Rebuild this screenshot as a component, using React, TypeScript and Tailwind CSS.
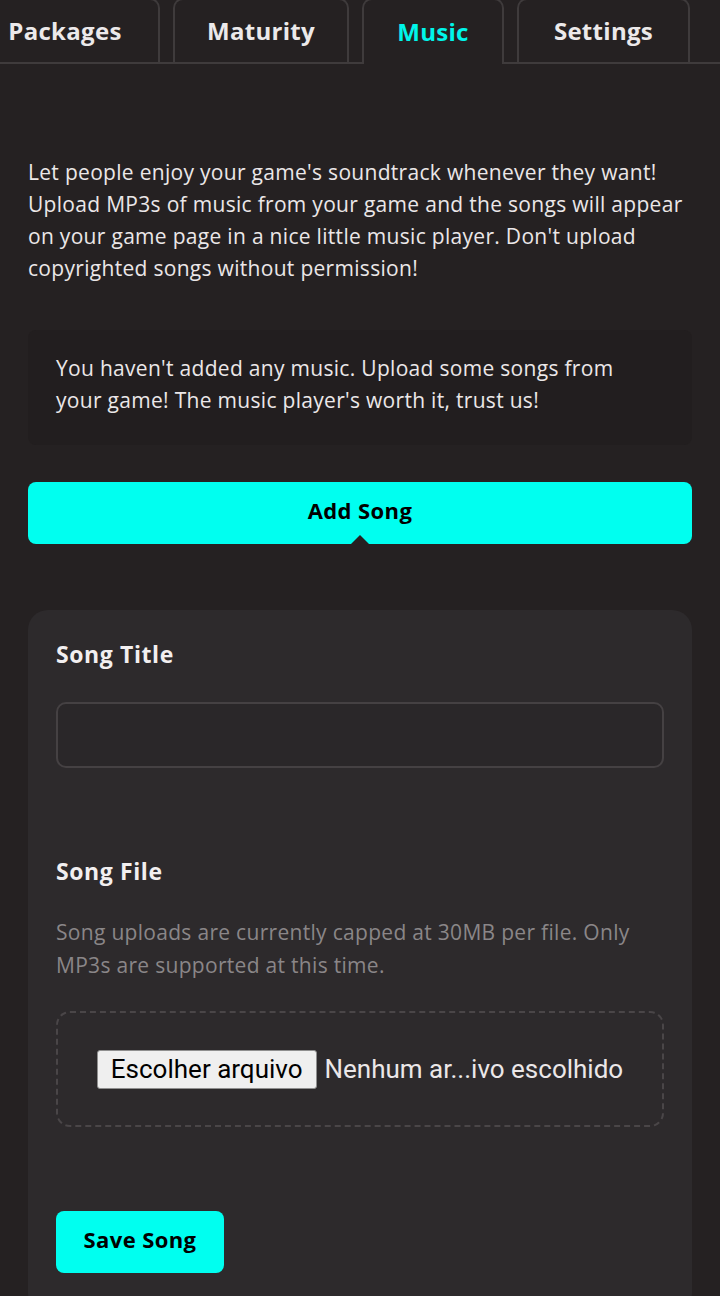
import React from "react";

const tabs = [
  { name: "Packages", w: "w-[190px]" },
  { name: "Maturity", w: "w-[176px]" },
  { name: "Music", w: "w-[142px]" },
  { name: "Settings", w: "w-[173px]" },
];

export default function App() {
  const active = "Music";

  return (
    <div className="min-h-[1296px] w-[720px] overflow-hidden bg-[#252122] font-['Open_Sans','Noto_Sans',sans-serif] text-[#ebe7e8]">
      {/* tabs */}
      <div className="relative h-[64px] border-b-2 border-[#3f3b3c]">
        <div className="absolute -top-[2px] left-[-30px] flex gap-[13px]">
          {tabs.map((t) => (
            <div
              key={t.name}
              className={
                t.name === active
                  ? `relative z-10 flex h-[66px] ${t.w} items-center justify-center rounded-t-[10px] border-2 border-b-0 border-[#3f3b3c] bg-[#252122] text-[24px] font-bold tracking-[0.3px] text-[#00f5ea]`
                  : `flex h-[64px] ${t.w} items-center justify-center rounded-t-[10px] border-2 border-b-0 border-[#3f3b3c] text-[24px] font-bold tracking-[0.3px] text-[#ece9ea]`
              }
            >
              {t.name}
            </div>
          ))}
        </div>
      </div>

      <div className="px-[28px]">
        <p className="mt-[92px] text-[21px] leading-[32px] tracking-[0.3px]">
          Let people enjoy your game's soundtrack whenever they want! Upload
          MP3s of music from your game and the songs will appear on your game
          page in a nice little music player. Don't upload copyrighted songs
          without permission!
        </p>

        <div className="mt-[46px] rounded-[8px] bg-[#221e1f] px-[28px] pb-[29px] pt-[22px]">
          <p className="text-[21px] leading-[32px] tracking-[0.3px]">
            You haven't added any music. Upload some songs from your game! The
            music player's worth it, trust us!
          </p>
        </div>

        <div className="relative mt-[37px] flex h-[62px] items-center justify-center rounded-[8px] bg-[#00fff0] pb-[6px] text-[22px] font-bold tracking-[0.4px] text-black">
          Add Song
          <div className="absolute bottom-0 left-1/2 h-0 w-0 -translate-x-1/2 border-x-[9px] border-b-[9px] border-x-transparent border-b-[#252122]" />
        </div>

        <div className="mt-[66px] rounded-[20px] bg-[#2d2a2c] px-[28px] pb-[40px] pt-[29px]">
          <h3 className="text-[23px] font-bold leading-[30px] tracking-[0.6px] text-[#f2eff0]">
            Song Title
          </h3>
          <div className="mt-[33px] h-[66px] rounded-[10px] border-2 border-[#454143] bg-[#2a2729]" />

          <h3 className="mt-[88px] text-[23px] font-bold leading-[30px] tracking-[0.6px] text-[#f2eff0]">
            Song File
          </h3>
          <p className="mt-[30px] text-[21px] leading-[33px] tracking-[0.3px] text-[#8a8688]">
            Song uploads are currently capped at 30MB per file. Only MP3s are
            supported at this time.
          </p>

          <div className="mt-[29px] flex h-[116px] items-center justify-center rounded-[14px] border-2 border-dashed border-[#4a4648]">
            <div className="flex items-center gap-[8px] font-['Roboto',sans-serif] text-[26px]">
              <span className="flex h-[39px] items-center rounded-[3px] border border-[#8f8f8f] bg-[#efefef] px-[13px] text-black">
                Escolher arquivo
              </span>
              <span className="text-[#ebe7e8]">Nenhum ar...ivo escolhido</span>
            </div>
          </div>

          <button className="mt-[84px] flex h-[62px] w-[168px] items-center justify-center rounded-[8px] bg-[#00fff0] pb-[6px] text-[22px] font-bold tracking-[0.4px] text-black">
            Save Song
          </button>
        </div>
      </div>
    </div>
  );
}
